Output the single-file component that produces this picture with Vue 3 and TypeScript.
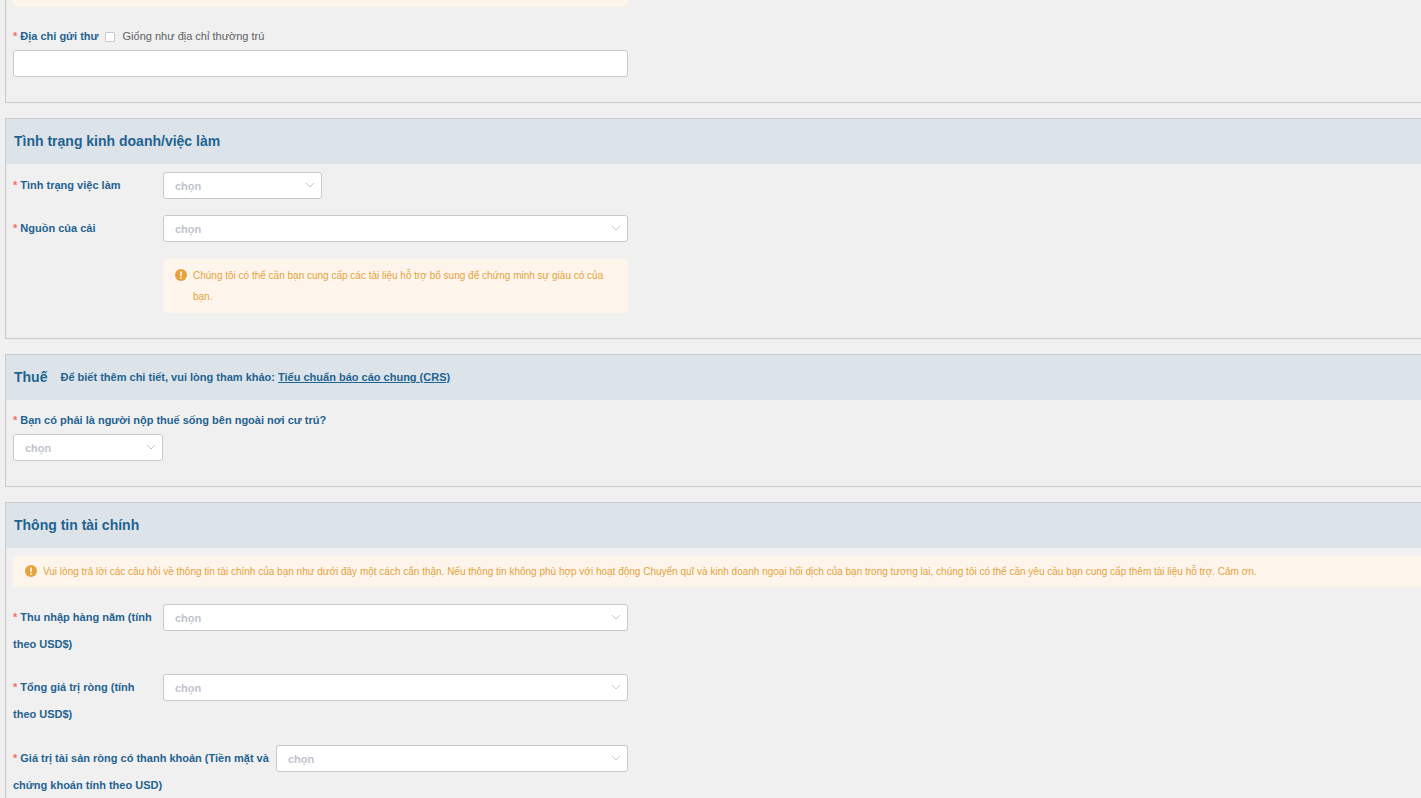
<script setup lang="ts">
import { ref } from 'vue'

interface Field {
  id: string
  label: string
  wide?: boolean
}

const mailingAddress = ref('')
const sameAddress = ref(false)

const financeFields: Field[] = [
  { id: 'income', label: 'Thu nhập hàng năm (tính theo USD$)' },
  { id: 'net-worth', label: 'Tổng giá trị ròng (tính theo USD$)' },
  { id: 'liquid', label: 'Giá trị tài sản ròng có thanh khoản (Tiền mặt và chứng khoán tính theo USD)', wide: true },
]
</script>

<template>
  <main class="page">
    <section class="panel first">
      <div class="notice notice-end"></div>
      <div class="body">
        <div class="line">
          <label class="label" for="mail">Địa chỉ gửi thư</label>
          <label class="check"><input v-model="sameAddress" type="checkbox" />Giống như địa chỉ thường trú</label>
        </div>
        <input id="mail" v-model="mailingAddress" class="text form" type="text" />
      </div>
    </section>

    <section class="panel">
      <header class="head"><h2>Tình trạng kinh doanh/việc làm</h2></header>
      <div class="body">
        <div class="row form">
          <label class="label" for="job">Tình trạng việc làm</label>
          <div class="select short">
            <select id="job"><option>chọn</option></select>
            <svg viewBox="0 0 10 10"><path d="M1 3l4 4 4-4" /></svg>
          </div>
        </div>
        <div class="row form">
          <label class="label" for="wealth">Nguồn của cải</label>
          <div class="select">
            <select id="wealth"><option>chọn</option></select>
            <svg viewBox="0 0 10 10"><path d="M1 3l4 4 4-4" /></svg>
          </div>
        </div>
        <div class="row form spaced">
          <div class="notice indented" role="note">
            <svg viewBox="0 0 12 12"><circle cx="6" cy="6" r="6" /><path d="M6 2.5v4.5M6 8v1.6" /></svg>
            <p>Chúng tôi có thể cần bạn cung cấp các tài liệu hỗ trợ bổ sung để chứng minh sự giàu có của bạn.</p>
          </div>
        </div>
      </div>
    </section>

    <section class="panel">
      <header class="head">
        <h2>Thuế</h2>
        <p>Để biết thêm chi tiết, vui lòng tham khảo: <a href="#crs">Tiểu chuẩn báo cáo chung (CRS)</a></p>
      </header>
      <div class="body tax">
        <label class="label" for="tax">Bạn có phải là người nộp thuế sống bên ngoài nơi cư trú?</label>
        <div class="select tax-select">
          <select id="tax"><option>chọn</option></select>
          <svg viewBox="0 0 10 10"><path d="M1 3l4 4 4-4" /></svg>
        </div>
      </div>
    </section>

    <section class="panel last">
      <header class="head"><h2>Thông tin tài chính</h2></header>
      <div class="body">
        <div class="notice full" role="note">
          <svg viewBox="0 0 12 12"><circle cx="6" cy="6" r="6" /><path d="M6 2.5v4.5M6 8v1.6" /></svg>
          <p>Vui lòng trả lời các câu hỏi về thông tin tài chính của bạn như dưới đây một cách cẩn thận. Nếu thông tin không phù hợp với hoạt động Chuyển quĩ và kinh doanh ngoại hối dịch của bạn trong tương lai, chúng tôi có thể cần yêu cầu bạn cung cấp thêm tài liệu hỗ trợ. Cảm ơn.</p>
        </div>
        <div v-for="field in financeFields" :key="field.id" class="row form" :class="{ 'wide spaced': field.wide }">
          <label class="label" :for="field.id">{{ field.label }}</label>
          <div class="select">
            <select :id="field.id"><option>chọn</option></select>
            <svg viewBox="0 0 10 10"><path d="M1 3l4 4 4-4" /></svg>
          </div>
        </div>
      </div>
    </section>
  </main>
</template>

<style>
body {
  background: #f0f0f0;
}
</style>

<style scoped>
* {
  box-sizing: border-box;
}
.page {
  display: flex;
  flex-direction: column;
  gap: 15px;
  padding-left: 5px;
  font: 11px/27px "Liberation Sans", Arial, sans-serif;
  color: #1f6391;
}
.panel {
  border: 1px solid #c8c9cc;
  border-right: 0;
}
.first {
  border-top: 0;
}
.last {
  border-bottom: 0;
}
.head {
  display: flex;
  align-items: center;
  gap: 13px;
  height: 45px;
  padding: 0 8px;
  background: #dce4ea;
}
h2,
p {
  margin: 0;
}
h2 {
  font-size: 14px;
  font-weight: 700;
}
.head p {
  font-weight: 700;
}
a {
  color: inherit;
}
.body {
  padding: 8px 0 25px 7px;
}
.first .body {
  padding-top: 16px;
}
.tax {
  padding-top: 7px;
}
.last .body {
  padding-bottom: 0;
}
.form {
  width: 100%;
  max-width: 615px;
}
.line {
  display: flex;
  align-items: center;
}
.label {
  font-weight: 700;
}
.label::before {
  content: "*";
  margin-right: 3px;
  color: #f56c6c;
}
.tax .label {
  display: block;
}
.check {
  display: flex;
  align-items: center;
  margin-left: 6px;
  color: #606266;
}
.check input {
  appearance: none;
  width: 10px;
  height: 10px;
  margin: 0 8px 0 0;
  border: 1px solid #c8c9cc;
  border-radius: 1px;
  background: #fff;
}
.check input:checked {
  background: #1f6391;
}
.text,
select {
  display: block;
  height: 27px;
  padding: 0 11px 2px;
  border: 1px solid #c8c9cc;
  border-radius: 3px;
  background: #fff;
  font: inherit;
}
.row {
  display: grid;
  grid-template-columns: 150px minmax(0, 1fr);
  align-items: start;
}
.row + .row {
  margin-top: 16px;
}
.row + .spaced {
  margin-top: 17px;
}
.row .label {
  padding-right: 4px;
}
.wide {
  grid-template-columns: 263px minmax(0, 1fr);
}
.select {
  position: relative;
}
.short {
  width: 159px;
}
.tax-select {
  width: 150px;
}
select {
  appearance: none;
  width: 100%;
  color: #c0c4cc;
  font-weight: 700;
}
.select svg {
  position: absolute;
  top: 8px;
  right: 7px;
  width: 10px;
  height: 10px;
  fill: none;
  stroke: #c0c4cc;
  pointer-events: none;
}
.notice {
  display: flex;
  gap: 6px;
  border-radius: 3px;
  background: #fdf5eb;
  color: #e6a23c;
  font-size: 10px;
  line-height: 21px;
}
.notice svg {
  flex: none;
  width: 12px;
  height: 12px;
  margin-top: 4px;
  fill: #e6a23c;
}
.notice path {
  stroke: #fdf5eb;
  stroke-width: 1.6;
}
.notice-end {
  height: 7px;
  max-width: 615px;
  margin-left: 7px;
  border-radius: 0 0 3px 3px;
}
.indented {
  grid-column: 2;
  padding: 6px 24px 6px 12px;
}
.full {
  margin-bottom: 17px;
  padding: 5px 12px;
  border-radius: 3px 0 0 3px;
}
</style>
